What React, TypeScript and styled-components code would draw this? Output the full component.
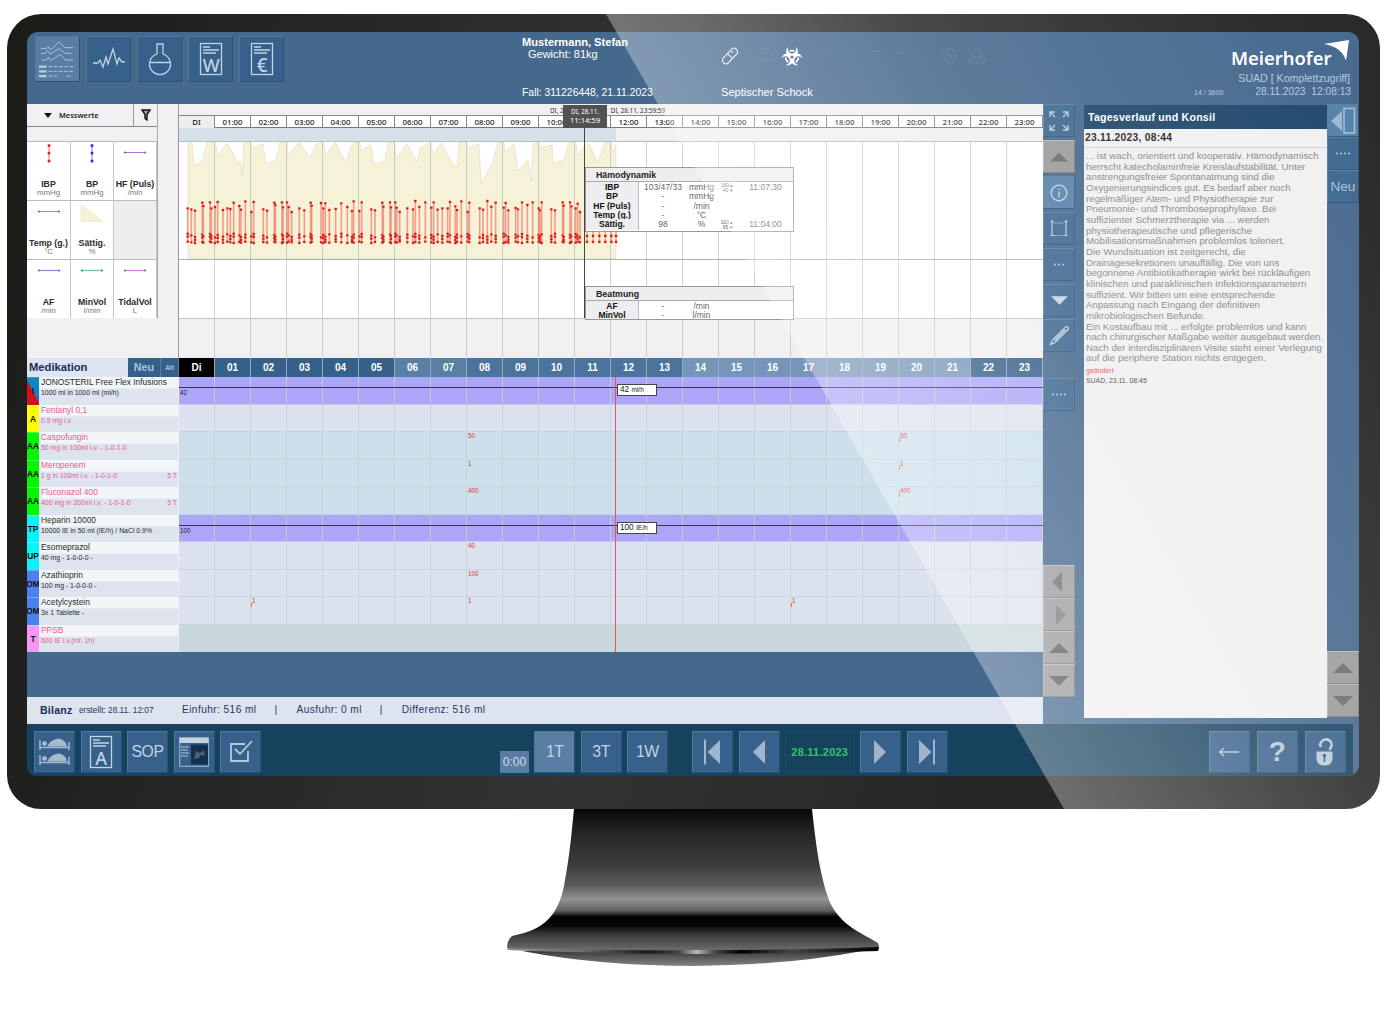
import React from "react";
import styled, { createGlobalStyle, css } from "styled-components";
import { FaBiohazard } from "react-icons/fa";

const Global = createGlobalStyle`
  * { box-sizing: border-box; }
  body { margin: 0; background: #fff; overflow: hidden; }
`;

const sans = `"Liberation Sans", Arial, sans-serif`;
const noto = `"Noto Sans", "Open Sans", sans-serif`;

const Page = styled.div`
  width: 1390px;
  height: 1026px;
  padding: 14px 0 0 7px;
  background: #fff;
  font-family: ${sans};
  display: flex;
  flex-direction: column;
  align-items: flex-start;
  white-space: nowrap;
`;

const Monitor = styled.div`
  position: relative;
  width: 1373px;
  height: 795px;
  flex: none;
  padding: 18px 21px 33px 20px;
  border-radius: 34px;
  overflow: hidden;
  background: linear-gradient(100deg, #1b1b18 0%, #282828 25%, #333 45%, #272727 72%, #262624 100%);
`;

const Glare = styled.div`
  position: absolute;
  left: 599px;
  top: 0;
  width: 774px;
  height: 795px;
  pointer-events: none;
  clip-path: polygon(0 0, 100% 0, 100% 100%, 458px 100%);
  background: linear-gradient(60deg, rgba(255, 255, 255, 0.33) 37%, rgba(255, 255, 255, 0.13) 62%, rgba(255, 255, 255, 0.02) 94%);
`;

const Screen = styled.div`
  width: 1332px;
  height: 744px;
  border-radius: 11px;
  overflow: hidden;
  background: #45688d;
  display: flex;
  flex-direction: column;
`;

/* ---------- header ---------- */
const Header = styled.header`
  height: 72px;
  flex: none;
  display: flex;
  padding: 4px 4px 0 8px;
  color: #fff;
`;
const TopButtons = styled.nav`
  display: flex;
  gap: 6px;
  width: 487px;
`;
const bevel = css`
  border: 1px solid;
  border-color: #5079a0 #2a5278 #2a5278 #5079a0;
`;
const IconButton = styled.button<{ $w: number; $h: number; $active?: boolean }>`
  width: ${(p) => p.$w}px;
  height: ${(p) => p.$h}px;
  flex: none;
  padding: 0;
  display: flex;
  align-items: center;
  justify-content: center;
  background: ${(p) => (p.$active ? "#5a7ea3" : "#37608a")};
  color: #c0d4e4;
  font: 15.8px ${sans};
  letter-spacing: -0.4px;
  ${bevel}
`;
const HelpMark = styled.span`
  font-size: 28px;
  font-weight: 700;
  color: #b9cadc;
`;
const Patient = styled.div`
  width: 199px;
  display: flex;
  flex-direction: column;
  font-size: 11px;
  line-height: 13px;
`;
const PatientName = styled.strong`
  font-size: 11.1px;
  line-height: 12px;
`;
const Weight = styled.span`
  padding-left: 6px;
  font-size: 11px;
`;
const CaseLine = styled.span`
  margin-top: 25px;
  font-size: 10.4px;
`;
const Flags = styled.div`
  flex: 1;
  display: flex;
  flex-direction: column;
  font-size: 11.1px;
  line-height: 13px;
`;
const FlagIcons = styled.div`
  height: 50px;
  display: flex;
`;
const Session = styled.div`
  width: 160px;
  display: flex;
  flex-direction: column;
  align-items: flex-end;
  color: #b4cade;
  font-size: 10.2px;
  line-height: 14px;
`;
const Brand = styled.div`
  height: 35px;
  width: 124px;
  display: flex;
  color: #fff;
  font: 600 18.4px/43px ${noto};
`;
const BrandArrow = styled.svg`
  flex: none;
  margin: 3px 0 0 -7px;
`;
const Access = styled.span`
  padding-right: 5px;
  font-size: 10.6px;
`;
const SessionRow = styled.div`
  display: flex;
  align-items: baseline;
  gap: 32px;
  padding-right: 4px;
  small { font-size: 7px; }
  span { word-spacing: 3px; }
`;

/* ---------- body ---------- */
const Body = styled.div`
  height: 620px;
  flex: none;
  display: flex;
`;
const Main = styled.main`
  width: 1016px;
  display: flex;
  flex-direction: column;
`;

const Charts = styled.section`
  height: 254px;
  flex: none;
  display: flex;
  background: #f0f0f2;
`;
const Legend = styled.div`
  width: 131px;
  border-right: 1px solid #aaa;
  height: 214px;
`;
const LegendHead = styled.div`
  height: 23px;
  display: flex;
  border-bottom: 1px solid #888;
  font: 600 7.4px/21px ${noto};
  color: #222;
`;
const LegendTitle = styled.div`
  width: 107px;
  padding-left: 17px;
  display: flex;
  align-items: center;
  gap: 7px;
  border-right: 1px solid #999;
`;
const FilterBox = styled.div`
  flex: 1;
  display: flex;
  align-items: center;
  justify-content: center;
`;
const LegendGrid = styled.div`
  margin-top: 14px;
  display: grid;
  grid-template-columns: 44px 43px 43px;
  grid-template-rows: 59px 59px 59px;
`;
const LegendCell = styled.div<{ $empty?: boolean }>`
  background: ${(p) => (p.$empty ? "#eeeef0" : "#fff")};
  border-top: 1px solid #bbb;
  border-right: 1px solid #c4c8cc;
  display: flex;
  flex-direction: column;
  align-items: center;
  line-height: 9px;
  color: #777;
  svg { height: 38px; flex: none; }
  b { color: #2c2c2c; font-size: 8.8px; }
  span { font-size: 7.8px; line-height: 8px; }
`;
const Spacer = styled.div`
  width: 21px;
  border-right: 1px solid #999;
`;
const Timeline = styled.div`
  position: relative;
  width: 864px;
  display: flex;
  flex-direction: column;
`;
const DateRange = styled.div`
  height: 11px;
  padding-left: 371px;
  display: flex;
  gap: 40px;
  font: 6.3px/13px ${noto};
  color: #333;
`;
const HourRow = styled.div`
  height: 13px;
  display: grid;
  grid-template-columns: repeat(24, 36px);
  border-top: 1px solid #888;
  border-bottom: 1px solid #777;
  background: #fff;
`;
const Hour = styled.div`
  border-right: 1px solid #888;
  text-align: center;
  font: 500 7.8px/12px ${noto};
  color: #222;
  &:first-child { background: #eee; }
`;
const Strip = styled.div`
  height: 14px;
  background: linear-gradient(90deg, #d6e0ea 437px, #f0f0f2 437px);
  border-bottom: 1px solid #bbb;
`;
const Tip = styled.div`
  position: absolute;
  left: 384px;
  top: 1px;
  width: 44px;
  height: 23px;
  padding-top: 2px;
  background: #525252;
  color: #fff;
  text-align: center;
  font: 6.3px/9px ${noto};
  b { display: block; font-weight: 400; font-size: 7.6px; }
`;
const Cursor = styled.div`
  position: absolute;
  left: 405px;
  top: 24px;
  width: 1px;
  height: 190px;
  background: #444;
`;
const Popup = styled.div<{ $top: number; $height: number }>`
  position: absolute;
  left: 406px;
  top: ${(p) => p.$top}px;
  width: 209px;
  height: ${(p) => p.$height}px;
  overflow: hidden;
  background: #fff;
  border: 1px solid #999;
`;
const PopupTitle = styled.div`
  height: 14px;
  padding-left: 10px;
  background: #eeeef0;
  border-bottom: 1px solid #aaa;
  font: bold 8.8px/15px ${sans};
  color: #222;
`;
const PopupRow = styled.div`
  height: 9.3px;
  display: grid;
  grid-template-columns: 53px 48px 29px 22px 1fr;
  text-align: center;
  font-size: 8.5px;
  line-height: 10px;
  color: #666;
  b { background: #eeeef0; border-right: 1px solid #bbb; color: #111; }
`;
const Limits = styled.small`
  font-size: 5px;
  line-height: 5px;
  white-space: pre;
  padding-top: 1px;
`;

/* ---------- medication ---------- */
const MedHeader = styled.div`
  height: 19px;
  flex: none;
  display: flex;
  background: #dde5f0;
  color: #fff;
  font-weight: bold;
`;
const MedTitle = styled.div`
  width: 101px;
  padding-left: 2px;
  color: #1d2a5c;
  font-size: 11.2px;
  line-height: 18px;
`;
const MedAction = styled.div<{ $w: number; $size: number }>`
  width: ${(p) => p.$w}px;
  text-align: center;
  background: #35608a;
  color: #a9c4dc;
  font-size: ${(p) => p.$size}px;
  line-height: 19px;
  border-right: 1px solid #5a7ea3;
`;
const MedHour = styled.div<{ $bg: string }>`
  width: 36px;
  text-align: center;
  background: ${(p) => p.$bg};
  border-right: 1px solid #8fabc4;
  font-size: 10px;
  line-height: 19px;
`;
const MedList = styled.section`
  position: relative;
  height: 275px;
  flex: none;
`;
const MedRow = styled.div`
  height: 27.5px;
  display: flex;
`;
const Code = styled.div<{ $bg: string }>`
  width: 12px;
  display: flex;
  justify-content: center;
  background: ${(p) => p.$bg};
  color: #111;
  font: bold 8.4px/27px ${sans};
  border-top: 1px solid rgba(255, 255, 255, 0.3);
`;
const Drug = styled.div<{ $pink?: boolean }>`
  width: 140px;
  padding-left: 2px;
  background: linear-gradient(#f2f6f9 11px, #dde4ee 12px);
  color: ${(p) => (p.$pink ? "#ea5a94" : "#2b2b2b")};
  font-size: 8.4px;
  line-height: 11px;
  border-right: 1px solid #eef;
`;
const Dose = styled.div`
  display: flex;
  justify-content: space-between;
  padding-right: 1px;
  font-size: 6.9px;
  line-height: 10px;
`;
const Lane = styled.div<{ $kind: string }>`
  width: 864px;
  display: grid;
  grid-template-columns: repeat(24, 36px);
  position: relative;
  background: ${(p) => ({ run: "#aba6f8", anti: "#cce0ec", blood: "#c8d8dc", idle: "#dce3ee" })[p.$kind]};
  border-bottom: 1px solid ${(p) => (p.$kind === "run" ? "#c8c8ea" : "#c8d3dc")};
`;
const Slot = styled.div<{ $plain: boolean }>`
  border-right: 1px solid ${(p) => (p.$plain ? "transparent" : "rgba(200,208,214,0.85)")};
  padding-left: 1px;
  color: #e03434;
  font-size: 6.3px;
  line-height: 7px;
`;
const Tick = styled.i`
  display: block;
  width: 1px;
  height: 4px;
  margin: -1px 0 0 -1px;
  background: #f0705c;
`;
const RateLine = styled.div`
  position: absolute;
  left: 0;
  right: 0;
  top: 10px;
  height: 1px;
  background: #33305c;
  span { position: absolute; left: 1px; top: 2px; font-size: 6.4px; line-height: 8px; color: #223; }
`;
const RateBox = styled.div`
  position: absolute;
  left: 438px;
  top: 7px;
  width: 40px;
  height: 12px;
  padding-left: 2px;
  background: #fff;
  border: 1px solid #444;
  color: #222;
  font-size: 8.2px;
  line-height: 10px;
  small { font-size: 6.6px; }
`;
const NowLine = styled.div`
  position: absolute;
  left: 588px;
  top: 0;
  width: 1px;
  height: 275px;
  background: #e0555f;
`;
const Balance = styled.div`
  height: 27px;
  margin-top: 45px;
  flex: none;
  display: flex;
  align-items: center;
  padding: 0 0 2px 13px;
  background: #dde4f0;
  color: #2b3560;
  font-size: 10.2px;
  letter-spacing: 0.4px;
  b { width: 39px; font-size: 10.6px; color: #1d2a5c; letter-spacing: 0.2px; }
  small { width: 103px; font-size: 8.3px; letter-spacing: 0; }
`;
const Divider = styled.span`
  margin: 0 19px 0 18px;
`;

/* ---------- side tools ---------- */
const Tools = styled.aside`
  width: 32px;
  display: flex;
  flex-direction: column;
`;
const Tool = styled.button<{ $gap?: number; $tone?: "grey" | "lit" }>`
  height: 33px;
  width: 32px;
  flex: none;
  margin: ${(p) => p.$gap ?? 3}px 0 0;
  padding: 0;
  display: flex;
  align-items: center;
  justify-content: center;
  font: 13.5px ${sans};
  color: #a9c1d8;
  background: ${(p) => (p.$tone === "grey" ? "#9b9a9a" : p.$tone === "lit" ? "#5580a8" : "#3d678f")};
  border: 1px solid;
  border-color: ${(p) => (p.$tone === "grey" ? "#b8b8b4 #7a7a78 #7a7a78 #b0b0ae" : "#547ea6 #2e557c #2e557c #547ea6")};
`;
const Notes = styled.article`
  width: 243px;
  height: 613px;
  margin-left: 9px;
  margin-top: 1px;
  background: #f0f0f0;
`;
const NotesTitle = styled.h2`
  margin: 0;
  height: 24px;
  padding-left: 4px;
  background: #1e466b;
  color: #fff;
  font: bold 10.6px/24px ${sans};
  letter-spacing: 0.22px;
`;
const NotesDate = styled.div`
  height: 19px;
  padding-left: 1px;
  border-bottom: 1px solid #d2d2d2;
  color: #222;
  font: bold 10.3px/18px ${sans};
  letter-spacing: 0.25px;
`;
const NotesText = styled.p`
  margin: 3px 0 0;
  padding-left: 2px;
  color: #858585;
  font-size: 9.72px;
  line-height: 10.66px;
  white-space: pre;
`;
const Changed = styled.div`
  padding: 2px 0 0 2px;
  color: #f04850;
  font-size: 7px;
  line-height: 10px;
  b { display: block; color: #444; font-weight: 400; font-size: 6.9px; }
`;

/* ---------- footer ---------- */
const Footer = styled.footer`
  height: 52px;
  width: 1326px;
  padding: 0 7px 3px;
  display: flex;
  align-items: flex-end;
  background: #17425e;
`;
const Group = styled.div<{ $gap: number; $ml?: number }>`
  display: flex;
  align-items: flex-end;
  gap: ${(p) => p.$gap}px;
  margin-left: ${(p) => p.$ml ?? 0}px;
`;
const TimeBox = styled.div`
  width: 29px;
  height: 22px;
  background: #5a7ea3;
  color: #c9d9e8;
  text-align: center;
  font-size: 12.2px;
  line-height: 22px;
`;
const Day = styled.div`
  width: 69px;
  height: 42px;
  border: 1px solid #1c4a68;
  color: #2fc46e;
  text-align: center;
  font: bold 11px/41px ${sans};
  letter-spacing: 0.25px;
`;

/* ---------- drawings ---------- */
const line = { fill: "none", stroke: "currentColor", strokeWidth: 1.3 } as const;

const Arrow = ({ dir, w = 20, fill = "#6b6b6b" }: { dir: "up" | "down" | "left" | "right"; w?: number; fill?: string }) => {
  const d = { up: "M0 15L10 5L20 15Z", down: "M0 5L10 15L20 5Z", left: "M13 0L3 10L13 20Z", right: "M7 0L17 10L7 20Z" }[dir];
  return <svg width={w} height={w} viewBox="0 0 20 20"><path d={d} fill={fill} /></svg>;
};

const CurvesIcon = () => (
  <svg width="37" height="37" viewBox="0 0 39 39" fill="none" stroke="#b3cfe0" strokeWidth="0.9">
    <path d="M2 8H8L10 6L12 9L15 7L21 1L27 7H36" />
    <path d="M2 13H7L9 10L12 14L16 11L21 8L28 13H34" />
    <path d="M3 20H8L10 17L12 21L18 17L22 14L28 20H36" />
    <path d="M0 27H8M0 32H8M0 37H8" strokeWidth="2.4" />
    <path d="M10 27H38M10 32H36M10 37H21M29 37H35" strokeDasharray="4 1.5" />
  </svg>
);
const PulseIcon = () => (
  <svg width="34" height="24" viewBox="0 0 34 24" {...line}><path d="M1 16H6L8 13L11 20L14 10L16 17L21 2L25 17L27 11L30 15H33" /></svg>
);
const FlaskIcon = () => (
  <svg width="26" height="34" viewBox="0 0 26 34" {...line}><path d="M10 12V2H16V12A10.5 10.5 0 1 1 10 12ZM3 20.500H23" /></svg>
);
const SheetIcon = ({ letter, size = 18 }: { letter: string; size?: number }) => (
  <svg width="24" height="34" viewBox="0 0 24 34" {...line}>
    <rect x="1.5" y="1.5" width="21" height="31" />
    <path d="M4 5H11M4 8H20M4 11H17" />
    <text x="12" y="29.5" fontSize={size} textAnchor="middle" fill="currentColor" stroke="none" fontFamily="Noto Sans" fontWeight="500">{letter}</text>
  </svg>
);
const BedsIcon = () => (
  <svg width="31" height="28" viewBox="0 0 31 28" fill="#a5b9cf" stroke="#a5b9cf">
    {[0, 15].map((y) => (
      <g key={y} transform={`translate(0 ${y})`}>
        <path d="M1 2V12M30 4V12M1 9.5H30" fill="none" strokeWidth="1.5" />
        <circle cx="5.5" cy="5.5" r="2" />
        <path d="M8 8.500Q12 1 20 0.500Q27 2 28 8.500Z" stroke="none" />
      </g>
    ))}
  </svg>
);
const DashboardIcon = () => (
  <svg width="30" height="30" viewBox="0 0 30 30">
    <rect x="0.7" y="0.7" width="28.6" height="28.6" fill="none" stroke="#8fb0cc" strokeWidth="1.2" />
    <rect x="0.5" y="1" width="29" height="5" fill="#c3d2e0" />
    <rect x="12" y="7.5" width="17" height="20" fill="#15304e" />
    <path d="M2 10H10M2 13H9M2 16H10M2 19H9" stroke="#b5cbdd" />
    <path d="M15 22L17 14L21 16L25 13L26 19L22 18L20 21Z" fill="#4b6079" />
  </svg>
);
const CheckIcon = () => (
  <svg width="26" height="26" viewBox="0 0 26 26" fill="none" stroke="#b4c9dc" strokeWidth="1.8"><path d="M17 5H3V22H20V12M7 10L12 15L24 2" /></svg>
);
const SkipIcon = ({ flip }: { flip?: boolean }) => (
  <svg width="18" height="26" viewBox="0 0 18 26" transform={flip ? "scale(-1 1)" : undefined}>
    <path d="M2 0.5V25.5" stroke="#9fb4cd" strokeWidth="2" /><path d="M17 1V25L4.500 13Z" fill="#9fb4cd" />
  </svg>
);
const PlayIcon = ({ back }: { back?: boolean }) => (
  <svg width="14" height="26" viewBox="0 0 14 26"><path d={back ? "M13 1V25L1 13Z" : "M1 1V25L13 13Z"} fill="#9fb4cd" /></svg>
);
const BackIcon = () => (
  <svg width="22" height="12" viewBox="0 0 22 12" fill="none" stroke="#a9cbd9" strokeWidth="1.4"><path d="M21 6H2M6 2L1.500 6L6 10" /></svg>
);
const LockIcon = () => (
  <svg width="20" height="30" viewBox="0 0 20 30">
    <path d="M6 10L5 7.500Q7 2 12 2.200Q17.500 4 16.500 9L14.500 13" fill="none" stroke="#b9cadc" strokeWidth="2.500" />
    <path d="M1.500 14.500H17.500V22Q17 28.500 9.500 28.500Q2 28.500 1.500 22Z" fill="#b9cadc" />
    <circle cx="9.500" cy="18.500" r="1.700" fill="#33587f" /><path d="M9.500 19V25" stroke="#33587f" strokeWidth="1.500" />
  </svg>
);
const ExpandIcon = () => (
  <svg width="20" height="20" viewBox="0 0 20 20" fill="none" stroke="#b9cfe0" strokeWidth="1.300">
    <path d="M1 6V1H6M1 1L6 6M14 1H19V6M19 1L14 6M1 14V19H6M1 19L6 14M14 19H19V14M19 19L14 14" />
  </svg>
);
const InfoIcon = () => (
  <svg width="18" height="18" viewBox="0 0 18 18" fill="none" stroke="#c3d5e6" strokeWidth="1.300"><circle cx="9" cy="9" r="7.800" /><path d="M9 7.500V13.500M9 4.500V6" /></svg>
);
const FrameIcon = () => (
  <svg width="18" height="19" viewBox="0 0 18 19" fill="none" stroke="#b9cfe0" strokeWidth="1.200">
    <path d="M2 1V17M16 1V17M0.500 2.500H3.500M14.500 2.500H17.500M0.500 16.500H4M14 16.500H17.500" /><path d="M4 4H14M4 16.500H14" strokeDasharray="1.500 1" />
  </svg>
);
const Dots = ({ n }: { n: number }) => (
  <svg width={n * 4} height="3" viewBox={`0 0 ${n * 4} 3`} fill="#c3d5e6">
    {Array.from({ length: n }, (_, i) => <circle key={i} cx={2 + i * 4} cy="1.500" r="0.900" />)}
  </svg>
);
const PencilIcon = () => (
  <svg width="21" height="21" viewBox="0 0 21 21" fill="none" stroke="#c3d5e6" strokeWidth="1.200"><path d="M1.500 19.500L3.500 15L17 1.500Q19.500 1.500 19.500 4L6 17.500ZM5.500 15.500L16.500 4.500" /></svg>
);
const PanelIcon = () => (
  <svg width="26" height="28" viewBox="0 0 26 28"><path d="M12 4V24L1 14Z" fill="#9db6d0" /><rect x="14" y="1.500" width="10.500" height="24.500" fill="none" stroke="#a5bcd4" strokeWidth="1.600" /></svg>
);
const FlagDrawing = () => (
  <svg width="280" height="30" viewBox="0 0 280 30" fill="none" stroke="#f4f8fb" strokeWidth="1">
    <g transform="translate(9 20) rotate(-47)"><rect x="-9.300" y="-3.500" width="18.600" height="7" rx="3.500" /><path d="M0 -3.500V3.500M3 -1.200H6" /></g>
    <g fill="#fff" stroke="none"><FaBiohazard x="61" y="10.500" size={20} /></g>
    <g stroke="#a9c6dc" opacity="0.170">
      <path d="M37 13H49M39 16H47M37 24H49M98 16L103 21L108 15M152 15H160M174 21Q179 13 186 18" />
      <circle cx="228" cy="20" r="7" /><path d="M228 15V20H232M220 14L236 26" />
      <circle cx="256" cy="17" r="4.500" /><path d="M248 27V23L253 21L256 25L259 21L264 23V27Z" />
    </g>
  </svg>
);

const Sample = ({ kind, color }: { kind: "v" | "h" | "area"; color: string }) => (
  <svg width="30" viewBox="0 0 30 37">
    {kind === "v" && (<g fill={color}><path d="M15 3V19" stroke={color} strokeOpacity="0.600" />{[3, 10.500, 18.500].map((y) => <rect key={y} x="13.700" y={y - 1.200} width="2.600" height="2.600" />)}</g>)}
    {kind === "h" && (<g><path d="M5 10H25" stroke={color} strokeWidth="1.200" /><circle cx="5" cy="10" r="1.100" fill="#1b9a80" /><circle cx="25" cy="10" r="1.100" fill="#1b9a80" /></g>)}
    {kind === "area" && <path d="M4 3V20H26L14 10Z" fill="#f5f2d8" stroke="#e5e2c8" strokeWidth="0.500" />}
  </svg>
);

/* Saturation contour: chart x, chart y */
const contour: [number, number][] = [
  [187, 141], [188, 144], [191, 141], [193, 165], [202, 159], [206, 141], [214, 141], [217, 155], [226, 142], [238, 163], [239, 160], [241, 175], [242, 160], [243, 141], [250, 141],
  [251, 147], [262, 143], [265, 163], [275, 159], [279, 141], [286, 141], [287, 154], [298, 141], [309, 157], [315, 143], [322, 141], [325, 154], [334, 141], [345, 162], [350, 145], [354, 141], [359, 141],
  [360, 149], [370, 144], [373, 163], [384, 160], [387, 141], [394, 141], [395, 158], [406, 143], [416, 161], [419, 147], [430, 141], [432, 154], [440, 142], [450, 160], [456, 167], [458, 141], [466, 141],
  [467, 147], [478, 143], [480, 182], [492, 161], [497, 141], [503, 141], [504, 151], [513, 143], [517, 170], [527, 159], [530, 180], [532, 143], [538, 141], [540, 146], [551, 144], [552, 163], [563, 158], [568, 141],
  [575, 141], [576, 155], [583, 146], [588, 143], [597, 161], [600, 152], [604, 141], [610, 141], [612, 152], [615, 144],
];
/* Pressure readings: x and systolic height in thirds of a pixel */
const readings: [number, number][] = [
  [560, 622], [571, 625], [582, 629], [604, 605], [607, 615], [627, 604], [631, 622], [642, 618], [650, 603], [666, 627], [679, 622], [688, 624], [698, 605], [715, 615], [720, 626], [733, 601], [751, 633], [758, 603],
  [787, 625], [798, 629], [820, 605], [823, 612], [843, 604], [846, 619], [858, 604], [863, 618], [872, 633], [895, 622], [910, 628], [929, 605], [932, 614], [960, 606], [967, 622], [973, 607], [985, 627], [1004, 624], [1021, 607], [1039, 618], [1053, 630], [1058, 601], [1075, 630], [1082, 604],
  [1111, 625], [1122, 628], [1144, 605], [1147, 617], [1167, 604], [1170, 619], [1183, 604], [1187, 620], [1196, 633], [1219, 622], [1236, 625], [1243, 600], [1255, 618], [1273, 604], [1291, 620], [1298, 604], [1310, 626], [1324, 622], [1340, 622], [1347, 603], [1363, 616], [1368, 627], [1381, 601],
  [1400, 633], [1405, 605], [1436, 622], [1446, 626], [1459, 600], [1471, 617], [1484, 605], [1508, 620], [1514, 606], [1522, 628], [1544, 621], [1551, 625], [1563, 604], [1579, 612], [1595, 604], [1613, 622], [1617, 628], [1622, 604], [1651, 625], [1662, 628], [1685, 604], [1688, 614], [1707, 604], [1711, 616], [1724, 622], [1730, 608], [1737, 633],
];
const hidden = [1758, 1776, 1795, 1813, 1831, 1845];

const Trend = () => (
  <svg width="864" height="177" viewBox="178 141 864 177">
    <rect x="178" y="141" width="864" height="177" fill="#fff" />
    <polygon points={`187,258 ${contour.map((p) => p.join(",")).join(" ")} 615,258`} fill="#f5f2d8" stroke="#dcdac8" strokeWidth="0.600" />
    {Array.from({ length: 23 }, (_, i) => <rect key={i} x={213 + i * 36} y="141" width="1" height="177" fill="#aeb4ba" opacity="0.600" />)}
    {readings.map(([x, top], i) => {
      const low = 722 + ((i * 7) % 5);
      const mid = 698 + ((i * 5) % 12);
      return (
        <g key={x} fill="#e01818">
          <rect x={x / 3 - 0.800} y={top / 3} width="1.600" height={(low - top) / 3} fill="#f0705c" opacity="0.650" />
          {[top, mid, mid + 9, low].map((y, k) => (k !== 2 || i % 3 !== 1) && <rect key={k} x={x / 3 - 1.200} y={y / 3 - 1.200} width="2.400" height="2.400" rx="0.700" />)}
        </g>
      );
    })}
    {hidden.map((x) => (
      <g key={x} fill="#e01818">
        <rect x={x / 3 - 0.700} y="228" width="1.400" height="13" fill="#f59a8c" />
        {[235, 241].map((y) => <rect key={y} x={x / 3 - 1.200} y={y - 1.300} width="2.400" height="2.400" />)}
      </g>
    ))}
    <path d="M178 258.500H1042" stroke="#b0b0b0" /><path d="M178 317.500H1042" stroke="#b9c6d6" />
  </svg>
);

const StandDrawing = styled.svg`
  flex: none;
  margin: -1px 0 0 493px;
`;
const Stand = () => (
  <StandDrawing width="390" height="160" viewBox="500 808 390 160">
    <defs>
      <linearGradient id="neck" x1="0" y1="809" x2="0" y2="950" gradientUnits="userSpaceOnUse">
        <stop offset="0" stopColor="#080808" /><stop offset="0.170" stopColor="#262626" /><stop offset="0.400" stopColor="#3d3d3d" /><stop offset="0.540" stopColor="#5c5c5c" />
        <stop offset="0.640" stopColor="#929292" /><stop offset="0.720" stopColor="#606060" /><stop offset="0.765" stopColor="#000" /><stop offset="0.830" stopColor="#080808" />
        <stop offset="0.880" stopColor="#343434" /><stop offset="1" stopColor="#6c6c6c" />
      </linearGradient>
      <linearGradient id="edge" x1="507" y1="0" x2="879" y2="0" gradientUnits="userSpaceOnUse">
        <stop offset="0" stopColor="#8c8c8c" /><stop offset="0.200" stopColor="#6c6c6c" /><stop offset="0.380" stopColor="#181818" /><stop offset="0.460" stopColor="#444" /><stop offset="0.510" stopColor="#b8b8b8" />
        <stop offset="0.560" stopColor="#444" /><stop offset="0.630" stopColor="#000" /><stop offset="0.760" stopColor="#444" /><stop offset="1" stopColor="#000" />
      </linearGradient>
      <linearGradient id="foot" x1="0" y1="948" x2="0" y2="966" gradientUnits="userSpaceOnUse"><stop offset="0" stopColor="#2a2a2a" /><stop offset="1" stopColor="#858585" /></linearGradient>
    </defs>
    <path d="M522 951Q600 966 695 966Q790 965 862 951Z" fill="url(#foot)" />
    <path d="M574 809H812C816 846 820 876 829 900C840 926 862 933 878 943Q880 947 878 950Q800 953 695 952Q590 951 508 950Q505 943 512 936L524 933C550 926 561 907 565 880C570 854 572 828 574 809Z" fill="url(#neck)" />
    <path d="M508 948Q600 951 695 950Q800 950 879 947L878 951Q800 953 695 954Q580 953 508 950Z" fill="url(#edge)" />
  </StandDrawing>
);

/* ---------- data ---------- */
const hours = Array.from({ length: 24 }, (_, i) => (i ? `${String(i).padStart(2, "0")}` : ""));
const hourColor = (i: number) => {
  if (i === 0) return "#000";
  if (i < 6) return "#35608a";
  if (i < 8) return "#5a7fa4";
  if (i < 14) return "#4a749c";
  if (i < 22) return "#7695b8";
  return "#355f87";
};
/* The cursor tooltip replaces the 11:00 label */
const scaleLabel = (h: string) => (h === "" ? "DI" : h === "11" ? "" : `${h}:00`);

type Med = { code: string; bg: string; name: string; dose: string; tag?: string; pink?: boolean; kind: string; rate?: [string, string, string]; marks?: Record<number, string> };
const meds: Med[] = [
  { code: "I", bg: "linear-gradient(63deg, #d0141c 50%, #0d84c8 50%)", name: "JONOSTERIL Free Flex Infusions", dose: "1000 ml in 1000 ml (ml/h)", kind: "run", rate: ["42", "42", "ml/h"] },
  { code: "A", bg: "#fdfd04", name: "Fentanyl 0,1", dose: "0.5 mg i.v", pink: true, kind: "idle" },
  { code: "AA", bg: "#06f506", name: "Caspofungin", dose: "50 mg in 100ml i.v. - 1-0-1-0", pink: true, kind: "anti", marks: { 8: "50", 20: "50" } },
  { code: "AA", bg: "#06f506", name: "Meropenem", dose: "1 g in 100ml i.v. - 1-0-1-0", tag: "5 T", pink: true, kind: "anti", marks: { 8: "1", 20: "1" } },
  { code: "AA", bg: "#06f506", name: "Fluconazol 400", dose: "400 mg in 200ml i.v. - 1-0-1-0", tag: "5 T", pink: true, kind: "anti", marks: { 8: "400", 20: "400" } },
  { code: "TP", bg: "#06f4fa", name: "Heparin 10000", dose: "10000 IE in 50 ml (IE/h) / NaCl 0.9%", kind: "run", rate: ["100", "100", "IE/h"] },
  { code: "UP", bg: "#06f4fa", name: "Esomeprazol", dose: "40 mg - 1-0-0-0 -", kind: "idle", marks: { 8: "40" } },
  { code: "OM", bg: "#4b80ee", name: "Azathioprin", dose: "100 mg - 1-0-0-0 -", kind: "idle", marks: { 8: "100" } },
  { code: "OM", bg: "#4b80ee", name: "Acetylcystein", dose: "3x 1 Tablette -", kind: "idle", marks: { 2: "1", 8: "1", 17: "1" } },
  { code: "T", bg: "#f996f6", name: "PPSB", dose: "600 IE i.v.(inf. 1h)", pink: true, kind: "blood" },
];

const legend: [string, string, "v" | "h" | "area", string][] = [
  ["IBP", "mmHg", "v", "#e02020"], ["BP", "mmHg", "v", "#2626dd"], ["HF (Puls)", "/min", "h", "#a777d8"],
  ["Temp (g.)", "°C", "h", "#5fae9c"], ["Sättig.", "%", "area", ""], ["", "", "area", ""],
  ["AF", "/min", "h", "#b37be6"], ["MinVol", "l/min", "h", "#6fc0ab"], ["TidalVol", "L", "h", "#c884d4"],
];

const note = `... ist wach, orientiert und kooperativ. Hämodynamisch
herrscht katecholaminfreie Kreislaufstabilität. Unter
anstrengungsfreier Spontanatmung sind die
Oxygenierungsindices gut. Es bedarf aber noch
regelmäßiger Atem- und Physiotherapie zur
Pneumonie- und Thromboseprophylaxe. Bei
suffizienter Schmerztherapie via ... werden
physiotherapeutische und pflegerische
Mobilisationsmaßnahmen problemlos toleriert.
Die Wundsituation ist zeitgerecht, die
Drainagesekretionen unauffällig. Die von uns
begonnene Antibiotikatherapie wirkt bei rückläufigen
klinischen und paraklinischen Infektionsparametern
suffizient. Wir bitten um eine entsprechende
Anpassung nach Eingang der definitiven
mikrobiologischen Befunde.
Ein Kostaufbau mit ... erfolgte problemlos und kann
nach chirurgischer Maßgabe weiter ausgebaut werden.
Nach der interdisziplinären Visite steht einer Verlegung
auf die periphere Station nichts entgegen.`;

const hemo: [string, string, string, string, string][] = [
  ["IBP", "103/47/33", "mmHg", "160 ▴\n 40 ▾", "11:07:30"], ["BP", "-", "mmHg", "", ""], ["HF (Puls)", "-", "/min", "", ""],
  ["Temp (g.)", "-", "°C", "", ""], ["Sättig.", "98", "%", "100 ▴\n 95 ▾", "11:04:00"],
];
const vent: typeof hemo = [["AF", "-", "/min", "", ""], ["MinVol", "-", "l/min", "", ""]];

const PopupTable = ({ title, rows, top, height }: { title: string; rows: typeof hemo; top: number; height: number }) => (
  <Popup $top={top} $height={height}>
    <PopupTitle>{title}</PopupTitle>
    {rows.map((r) => (
      <PopupRow key={r[0]}><b>{r[0]}</b><span>{r[1]}</span><span>{r[2]}</span><Limits>{r[3]}</Limits><span>{r[4]}</span></PopupRow>
    ))}
  </Popup>
);

export default function App() {
  return (
    <Page>
      <Global />
      <Monitor>
        <Screen>
          <Header>
            <TopButtons>
              <IconButton $w={45} $h={46} $active><CurvesIcon /></IconButton>
              <IconButton $w={45} $h={46}><PulseIcon /></IconButton>
              <IconButton $w={45} $h={46}><FlaskIcon /></IconButton>
              <IconButton $w={45} $h={46}><SheetIcon letter="W" /></IconButton>
              <IconButton $w={45} $h={46}><SheetIcon letter="€" size={19} /></IconButton>
            </TopButtons>
            <Patient>
              <PatientName>Mustermann, Stefan</PatientName>
              <Weight>Gewicht: 81kg</Weight>
              <CaseLine>Fall: 311226448, 21.11.2023</CaseLine>
            </Patient>
            <Flags><FlagIcons><FlagDrawing /></FlagIcons>Septischer Schock</Flags>
            <Session>
              <Brand>
                Meierhofer
                <BrandArrow width="26" height="24" viewBox="0 0 26 24"><path d="M0 5L25 1L22 22Q18 8 0 5Z" fill="#fff" /></BrandArrow>
              </Brand>
              <Access>SUAD [ Komplettzugriff]</Access>
              <SessionRow><small>14 / 3600</small><span>28.11.2023 12:08:13</span></SessionRow>
            </Session>
          </Header>

          <Body>
            <Main>
              <Charts>
                <Legend>
                  <LegendHead>
                    <LegendTitle><svg width="8" height="5"><path d="M0 0H8L4 5Z" fill="#111" /></svg>Messwerte</LegendTitle>
                    <FilterBox><svg width="10" height="12" viewBox="0 0 10 12"><path d="M1 1H9L6 5.500V11L4 9.500V5.500Z" fill="#999" stroke="#111" strokeWidth="1.400" /></svg></FilterBox>
                  </LegendHead>
                  <LegendGrid>
                    {legend.map(([n, u, k, c], i) => (
                      <LegendCell key={i} $empty={!n}>{n && <><Sample kind={k} color={c} /><b>{n}</b><span>{u}</span></>}</LegendCell>
                    ))}
                  </LegendGrid>
                </Legend>
                <Spacer />
                <Timeline>
                  <DateRange><span>DI, 2</span><span>-&nbsp;&nbsp;&nbsp;DI, 28.11. 23:59:59</span></DateRange>
                  <HourRow>{hours.map((h, i) => <Hour key={i}>{scaleLabel(h)}</Hour>)}</HourRow>
                  <Strip />
                  <Trend />
                  <svg width="864" height="39">{Array.from({ length: 23 }, (_, i) => <rect key={i} x={35 + i * 36} y="0" width="1" height="39" fill="#c9cdd2" />)}</svg>
                  <Cursor />
                  <Tip>DI, 28.11.<b>11:14:59</b></Tip>
                  <PopupTable title="Hämodynamik" rows={hemo} top={63} height={65} />
                  <PopupTable title="Beatmung" rows={vent} top={182} height={34} />
                </Timeline>
              </Charts>

              <MedHeader>
                <MedTitle>Medikation</MedTitle>
                <MedAction $w={33} $size={10.8}>Neu</MedAction>
                <MedAction $w={18} $size={6.5}>Alt</MedAction>
                {hours.map((h, i) => <MedHour key={i} $bg={hourColor(i)}>{h || "Di"}</MedHour>)}
              </MedHeader>
              <MedList>
                {meds.map((m) => (
                  <MedRow key={m.name}>
                    <Code $bg={m.bg}>{m.code}</Code>
                    <Drug $pink={m.pink}>{m.name}<Dose><span>{m.dose}</span><span>{m.tag}</span></Dose></Drug>
                    <Lane $kind={m.kind}>
                      {hours.map((_, i) => (
                        <Slot key={i} $plain={m.kind === "blood"}>{m.marks?.[i]}{m.marks?.[i] && i !== 8 && <Tick />}</Slot>
                      ))}
                      {m.rate && <><RateLine><span>{m.rate[0]}</span></RateLine><RateBox>{m.rate[1]} <small>{m.rate[2]}</small></RateBox></>}
                    </Lane>
                  </MedRow>
                ))}
                <NowLine />
              </MedList>
              <Balance>
                <b>Bilanz</b><small>erstellt: 28.11. 12:07</small>
                <span>Einfuhr: 516 ml</span><Divider>|</Divider>
                <span>Ausfuhr: 0 ml</span><Divider>|</Divider><span>Differenz: 516 ml</span>
              </Balance>
            </Main>

            <Tools>
              <Tool $gap={0}><ExpandIcon /></Tool>
              <Tool $tone="grey"><Arrow dir="up" w={18} /></Tool>
              <Tool $tone="lit"><InfoIcon /></Tool>
              <Tool><FrameIcon /></Tool>
              <Tool><Dots n={3} /></Tool>
              <Tool><Arrow dir="down" w={17} fill="#c3d5e6" /></Tool>
              <Tool $gap={2}><PencilIcon /></Tool>
              <Tool $gap={26}><Dots n={4} /></Tool>
              <Tool $gap={154} $tone="grey"><Arrow dir="left" w={20} fill="#6f6f6f" /></Tool>
              <Tool $gap={0} $tone="grey"><Arrow dir="right" w={20} fill="#7c7c7c" /></Tool>
              <Tool $gap={0} $tone="grey"><Arrow dir="up" w={20} fill="#5c5c5c" /></Tool>
              <Tool $gap={0} $tone="grey"><Arrow dir="down" w={20} fill="#5c5c5c" /></Tool>
            </Tools>

            <Notes>
              <NotesTitle>Tagesverlauf und Konsil</NotesTitle>
              <NotesDate>23.11.2023, 08:44</NotesDate>
              <NotesText>{note}</NotesText>
              <Changed>geändert<b>SUAD, 23.11. 08:45</b></Changed>
            </Notes>

            <Tools>
              <Tool $gap={0} $tone="lit"><PanelIcon /></Tool>
              <Tool $gap={0}><Dots n={4} /></Tool>
              <Tool $gap={0}>Neu</Tool>
              <Tool $gap={448} $tone="grey"><Arrow dir="up" /></Tool>
              <Tool $gap={0} $tone="grey"><Arrow dir="down" /></Tool>
            </Tools>
          </Body>

          <Footer>
            <Group $gap={5.5}>
              <IconButton $w={41} $h={42}><BedsIcon /></IconButton>
              <IconButton $w={41} $h={42}><SheetIcon letter="A" /></IconButton>
              <IconButton $w={41} $h={42}>SOP</IconButton>
              <IconButton $w={41} $h={42}><DashboardIcon /></IconButton>
              <IconButton $w={41} $h={42}><CheckIcon /></IconButton>
            </Group>
            <Group $gap={5.3} $ml={239}>
              <TimeBox>0:00</TimeBox>
              <IconButton $w={41} $h={42} $active>1T</IconButton>
              <IconButton $w={41} $h={42}>3T</IconButton>
              <IconButton $w={41} $h={42}>1W</IconButton>
            </Group>
            <Group $gap={5.7} $ml={24}>
              <IconButton $w={41} $h={42}><SkipIcon /></IconButton>
              <IconButton $w={41} $h={42}><PlayIcon back /></IconButton>
              <Day>28.11.2023</Day>
              <IconButton $w={41} $h={42}><PlayIcon /></IconButton>
              <IconButton $w={41} $h={42}><SkipIcon flip /></IconButton>
            </Group>
            <Group $gap={7} $ml={261}>
              <IconButton $w={41} $h={42}><BackIcon /></IconButton>
              <IconButton $w={41} $h={42}><HelpMark>?</HelpMark></IconButton>
              <IconButton $w={41} $h={42}><LockIcon /></IconButton>
            </Group>
          </Footer>
        </Screen>
        <Glare />
      </Monitor>
      <Stand />
    </Page>
  );
}
